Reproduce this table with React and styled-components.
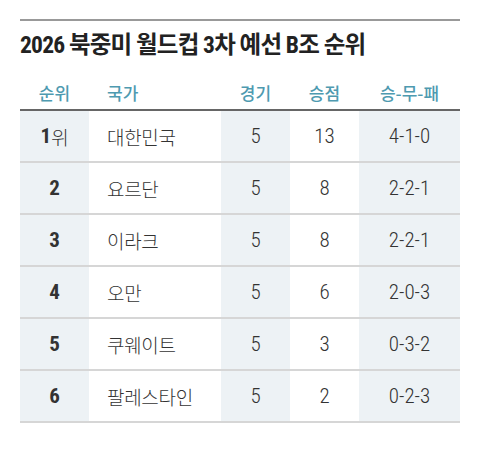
import { Fragment } from "react";
import styled, { createGlobalStyle } from "styled-components";

const Global = createGlobalStyle`
  html, body { margin: 0; padding: 0; background: #fff; }
  body { font-family: "Roboto Condensed", "Liberation Sans Narrow", Roboto, "Noto Sans CJK KR", sans-serif; }
`;

const Wrap = styled.div`
  width: 440px;
  margin: 0 auto;
  padding-top: 19px;
`;

const Title = styled.h1`
  margin: 0;
  border-top: 2px solid #999;
  padding: 9px 0 0;
  font-size: 23.5px;
  font-weight: 700;
  color: #222;
  letter-spacing: -0.8px;
  line-height: 30px;
`;

const Grid = styled.div`
  display: grid;
  grid-template-columns: 69px 132px 69px 69px 1fr;
  margin-top: 19px;
`;

const Head = styled.div`
  height: 30px;
  line-height: 28px;
  border-bottom: 2px solid #666;
  color: #4e9ab0;
  font-size: 17px;
  font-weight: 500;
  text-align: ${p => (p.$left ? "left" : "center")};
  padding-left: ${p => (p.$left ? "18px" : "0")};
  font-family: "Noto Sans CJK KR", sans-serif;
`;

const Cell = styled.div`
  height: 50px;
  display: flex;
  align-items: center;
  justify-content: ${p => (p.$left ? "flex-start" : "center")};
  padding-left: ${p => (p.$left ? "18px" : "0")};
  background: ${p => (p.$shade ? "#edf2f5" : "#fff")};
  border-bottom: 2px solid #d6d6d6;
  font-size: 21px;
  color: #333;
  font-weight: ${p => (p.$bold ? 700 : 300)};
`;

const Kr = styled.span`
  font-family: "Noto Sans CJK KR", sans-serif;
  font-size: 19px;
  font-weight: 300;
  letter-spacing: -0.3px;
`;

const rows = [
  ["1", "대한민국", 5, 13, "4-1-0"],
  ["2", "요르단", 5, 8, "2-2-1"],
  ["3", "이라크", 5, 8, "2-2-1"],
  ["4", "오만", 5, 6, "2-0-3"],
  ["5", "쿠웨이트", 5, 3, "0-3-2"],
  ["6", "팔레스타인", 5, 2, "0-2-3"],
];

export default function App() {
  return (
    <>
      <Global />
      <Wrap>
        <Title>2026 북중미 월드컵 3차 예선 B조 순위</Title>
        <Grid>
          <Head>순위</Head>
          <Head $left>국가</Head>
          <Head>경기</Head>
          <Head>승점</Head>
          <Head>승-무-패</Head>
          {rows.map(r => (
            <Fragment key={r[0]}>
              <Cell $shade $bold>
                {r[0]}{r[0] === "1" && <Kr>위</Kr>}
              </Cell>
              <Cell $left><Kr>{r[1]}</Kr></Cell>
              <Cell $shade>{r[2]}</Cell>
              <Cell>{r[3]}</Cell>
              <Cell $shade>{r[4]}</Cell>
            </Fragment>
          ))}
        </Grid>
      </Wrap>
    </>
  );
}
